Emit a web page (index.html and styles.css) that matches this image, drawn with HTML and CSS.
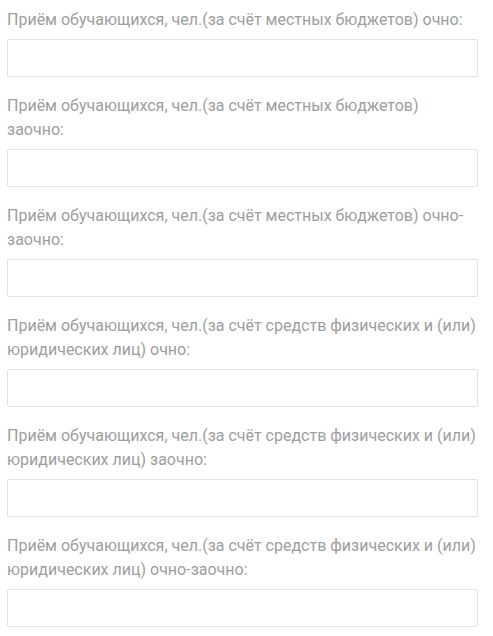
FILE: index.html
```html
<!DOCTYPE html>
<html lang="ru">
<head>
<meta charset="utf-8">
<title>Форма</title>
<link rel="stylesheet" href="styles.css">
</head>
<body>
<form class="form">
  <div class="field">
    <label class="field-label">Приём обучающихся, чел.(за счёт местных бюджетов) очно:</label>
    <input class="field-input" type="text">
  </div>
  <div class="field">
    <label class="field-label">Приём обучающихся, чел.(за счёт местных бюджетов) заочно:</label>
    <input class="field-input" type="text">
  </div>
  <div class="field">
    <label class="field-label">Приём обучающихся, чел.(за счёт местных бюджетов) очно-заочно:</label>
    <input class="field-input" type="text">
  </div>
  <div class="field">
    <label class="field-label">Приём обучающихся, чел.(за счёт средств физических и (или) юридических лиц) очно:</label>
    <input class="field-input" type="text">
  </div>
  <div class="field">
    <label class="field-label">Приём обучающихся, чел.(за счёт средств физических и (или) юридических лиц) заочно:</label>
    <input class="field-input" type="text">
  </div>
  <div class="field">
    <label class="field-label">Приём обучающихся, чел.(за счёт средств физических и (или) юридических лиц) очно-заочно:</label>
    <input class="field-input" type="text">
  </div>
</form>
</body>
</html>
```
FILE: styles.css
```css
html, body {
  margin: 0;
  padding: 0;
  background: #ffffff;
}
body {
  font-family: Roboto, "Liberation Sans", sans-serif;
  font-size: 16px;
  color: #9e9e9e;
}
.form {
  display: flex;
  flex-direction: column;
  gap: 17px;
  padding: 8px 15px 0 7px;
}
.field {
  display: flex;
  flex-direction: column;
  gap: 7px;
}
.field-label {
  display: block;
  line-height: 24px;
  font-weight: 400;
}
.field-input {
  display: block;
  box-sizing: border-box;
  width: 100%;
  height: 38px;
  margin: 0;
  border: 1px solid #e2e2e2;
  border-radius: 2px;
  background: #ffffff;
  font: inherit;
  padding: 0 10px;
  outline: none;
}
```
